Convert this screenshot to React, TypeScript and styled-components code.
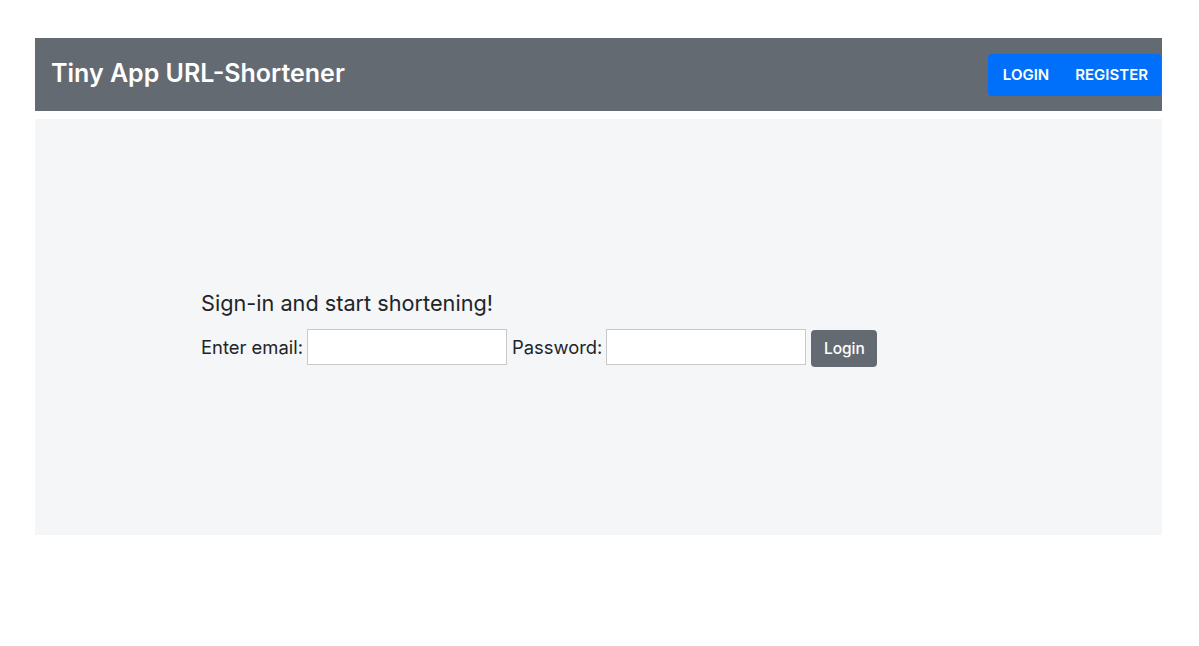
import styled, { createGlobalStyle } from "styled-components";

const GlobalStyle = createGlobalStyle`
  body {
    margin: 0;
    background: #ffffff;
    font-family: Inter, "Liberation Sans", sans-serif;
    color: #212529;
  }
`;

const Page = styled.div`
  padding: 38px 37px 0 35px;
`;

const NavBar = styled.header`
  height: 73px;
  background: #646a72;
  display: flex;
  align-items: center;
  justify-content: space-between;
  padding: 0 1px 0 16px;
`;

const Brand = styled.h1`
  margin: 0;
  color: #ffffff;
  font-size: 25px;
  font-weight: 600;
  padding-bottom: 4px;
`;

const NavGroup = styled.div`
  display: flex;
  background: #0070fb;
  border-radius: 4px;
  height: 42px;
  align-items: center;
  padding: 0 13px 0 15px;
  gap: 26px;
`;

const NavLink = styled.a`
  color: #ffffff;
  font-size: 15px;
  font-weight: 600;
  text-transform: uppercase;
  text-decoration: none;
`;

const Jumbo = styled.main`
  margin-top: 8px;
  height: 416px;
  background: #f5f6f8;
  display: flex;
  align-items: center;
  padding: 0 166px;
`;

const SignIn = styled.section`
  display: flex;
  flex-direction: column;
  gap: 11px;
  padding-top: 3px;
`;

const Heading = styled.h5`
  margin: 0;
  font-size: 21.7px;
  font-weight: 400;
  line-height: 1.2;
`;

const Form = styled.form`
  display: flex;
  align-items: center;
`;

const Label = styled.label`
  font-size: 18.4px;
  margin-right: 4px;
`;

const Field = styled.input`
  width: 200px;
  height: 36px;
  box-sizing: border-box;
  border: 1px solid #c9c9c9;
  background: #ffffff;
  margin-right: 5px;
  padding: 0 6px;
`;

const Submit = styled.button`
  height: 37px;
  width: 66px;
  margin-top: 2px;
  border: none;
  border-radius: 4px;
  background: #646a72;
  color: #ffffff;
  font-family: inherit;
  font-size: 15.5px;
  font-weight: 500;
`;

export default function App() {
  return (
    <>
      <GlobalStyle />
      <Page>
        <NavBar>
          <Brand>Tiny App URL-Shortener</Brand>
          <NavGroup>
            <NavLink href="#">Login</NavLink>
            <NavLink href="#">Register</NavLink>
          </NavGroup>
        </NavBar>
        <Jumbo>
          <SignIn>
            <Heading>Sign-in and start shortening!</Heading>
            <Form onSubmit={(e) => e.preventDefault()}>
              <Label>Enter email:</Label>
              <Field type="email" />
              <Label>Password:</Label>
              <Field type="password" />
              <Submit type="submit">Login</Submit>
            </Form>
          </SignIn>
        </Jumbo>
      </Page>
    </>
  );
}
